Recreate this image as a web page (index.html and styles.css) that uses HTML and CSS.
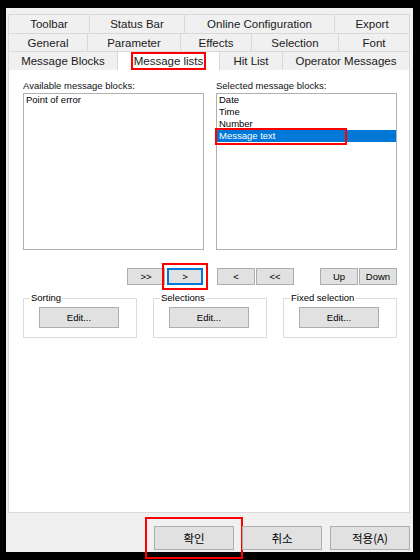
FILE: index.html
```html
<!DOCTYPE html>
<html lang="en">
<head>
    <meta charset="UTF-8">
    <title>Message lists</title>
    <link rel="stylesheet" href="styles.css">
</head>
<body>
    <div class="window">
        <!-- Tab strip -->
        <div class="tabs">
            <div class="tab-row row-1">
                <div class="tab t-toolbar">Toolbar</div>
                <div class="tab t-status">Status Bar</div>
                <div class="tab t-online">Online Configuration</div>
                <div class="tab t-export">Export</div>
            </div>
            <div class="tab-row row-2">
                <div class="tab t-general">General</div>
                <div class="tab t-param">Parameter</div>
                <div class="tab t-effects">Effects</div>
                <div class="tab t-select">Selection</div>
                <div class="tab t-font">Font</div>
            </div>
            <div class="tab-row row-3">
                <div class="tab t-blocks">Message Blocks</div>
                <div class="tab t-lists active"><span class="mark-tab">Message lists</span></div>
                <div class="tab t-hit">Hit List</div>
                <div class="tab t-operator">Operator Messages</div>
            </div>
        </div>

        <!-- Tab page -->
        <div class="panel">
            <div class="lists">
                <div class="list-col">
                    <div class="label">Available message blocks:</div>
                    <div class="listbox">
                        <div class="item">Point of error</div>
                    </div>
                </div>
                <div class="list-col">
                    <div class="label">Selected message blocks:</div>
                    <div class="listbox">
                        <div class="item">Date</div>
                        <div class="item">Time</div>
                        <div class="item">Number</div>
                        <div class="item selected"><span class="mark-item">Message text</span></div>
                    </div>
                </div>
            </div>

            <div class="move-row">
                <button class="btn small b-all-right">&gt;&gt;</button>
                <button class="btn small focused">&gt;</button>
                <button class="btn small b-left">&lt;</button>
                <button class="btn small">&lt;&lt;</button>
                <button class="btn small b-up">Up</button>
                <button class="btn small">Down</button>
            </div>

            <div class="groups">
                <fieldset class="group">
                    <legend>Sorting</legend>
                    <button class="btn edit">Edit...</button>
                </fieldset>
                <fieldset class="group">
                    <legend>Selections</legend>
                    <button class="btn edit">Edit...</button>
                </fieldset>
                <fieldset class="group">
                    <legend>Fixed selection</legend>
                    <button class="btn edit">Edit...</button>
                </fieldset>
            </div>
        </div>

        <!-- Dialog buttons -->
        <div class="footer">
            <button class="btn dlg ok">확인</button>
            <button class="btn dlg">취소</button>
            <button class="btn dlg">적용(A)</button>
        </div>
    </div>
</body>
</html>
```

FILE: styles.css
```css
/* Page */
body {
    margin: 0;
    padding: 0;
    width: 420px;
    height: 560px;
    overflow: hidden;
    background: #000;
    font-family: "Liberation Sans", "Noto Sans CJK KR", sans-serif;
    color: #000;
}

/* Dialog window */
.window {
    margin: 8px 0 0 6px;
    width: 407px;
    height: 544px;
    background: #f0f0f0;
    display: flex;
    flex-direction: column;
}

/* Tabs */
.tabs {
    padding: 6px 0 0 2px;
    width: 402px;
}

.tab-row {
    display: flex;
}

.row-1 { height: 19px; }
.row-2 { height: 18px; }
.row-3 { height: 19px; }

.tab {
    box-sizing: border-box;
    border: 1px solid #d9d9d9;
    border-bottom: none;
    margin-left: -1px;
    background: #f0f0f0;
    font-size: 11.5px;
    color: #1a1a1a;
    display: flex;
    align-items: center;
    justify-content: center;
}

.tab:first-child { margin-left: 0; }

.tab.active {
    background: #fff;
}

.t-toolbar { width: 82px; }
.t-status { width: 96px; }
.t-online { width: 151px; }
.t-export { width: 76px; }

.t-general { width: 80px; }
.t-param { width: 94px; }
.t-effects { width: 72px; }
.t-select { width: 88px; }
.t-font { width: 72px; }

.t-blocks { width: 110px; }
.t-lists { width: 103px; }
.t-hit { width: 64px; }
.t-operator { width: 128px; }

.mark-tab {
    outline: 2px solid #f00;
    padding: 0 1px;
    line-height: 14px;
}

/* Page body */
.panel {
    box-sizing: border-box;
    width: 402px;
    height: 443px;
    margin-left: 2px;
    background: #fff;
    border: 1px solid #d9d9d9;
    border-top: none;
    padding: 9px 0 0 14px;
    font-size: 9.5px;
}

.lists {
    display: flex;
    gap: 12px;
}

.label {
    height: 14px;
    line-height: 14px;
    color: #111;
}

.listbox {
    box-sizing: border-box;
    width: 181px;
    height: 157px;
    border: 1px solid #b0b0b0;
}

.item {
    height: 12px;
    line-height: 12px;
    padding-left: 2px;
}

.item.selected {
    background: #0078d7;
    color: #fff;
}

.mark-item {
    display: inline-block;
    width: 126px;
    margin-left: -2px;
    padding-left: 2px;
    height: 13px;
    outline: 2px solid #f00;
}

/* Buttons */
.btn {
    box-sizing: border-box;
    font-family: inherit;
    background: #e1e1e1;
    border: 1px solid #adadad;
    padding: 0;
    color: #000;
}

.move-row {
    display: flex;
    margin: 18px 0 0 104px;
}

.small {
    width: 38px;
    height: 17px;
    font-size: 9.5px;
    margin-right: 1px;
}

.focused {
    border: 2px solid #0078d7;
    width: 36px;
    outline: 2px solid #f00;
    outline-offset: 3px;
    margin-left: 1px;
}

.b-left { margin-left: 13px; }
.b-up { margin-left: 25px; }

.groups {
    display: flex;
    gap: 16px;
    margin-top: 8px;
}

.group {
    box-sizing: border-box;
    width: 114px;
    height: 45px;
    margin: 0;
    padding: 0 0 0 15px;
    border: 1px solid #dcdcdc;
}

.group legend {
    font-size: 9.5px;
    padding: 0 1px;
    margin-left: -9px;
    line-height: 10px;
}

.edit {
    width: 80px;
    height: 21px;
    font-size: 9.5px;
    margin-top: 4px;
}

/* Dialog footer */
.footer {
    display: flex;
    justify-content: flex-end;
    gap: 8px;
    padding: 13px 3px 0 0;
}

.dlg {
    width: 80px;
    height: 24px;
    font-size: 11.5px;
    font-family: "Noto Sans CJK KR", sans-serif;
}

.ok {
    outline: 2px solid #f00;
    outline-offset: 7px;
}
```
